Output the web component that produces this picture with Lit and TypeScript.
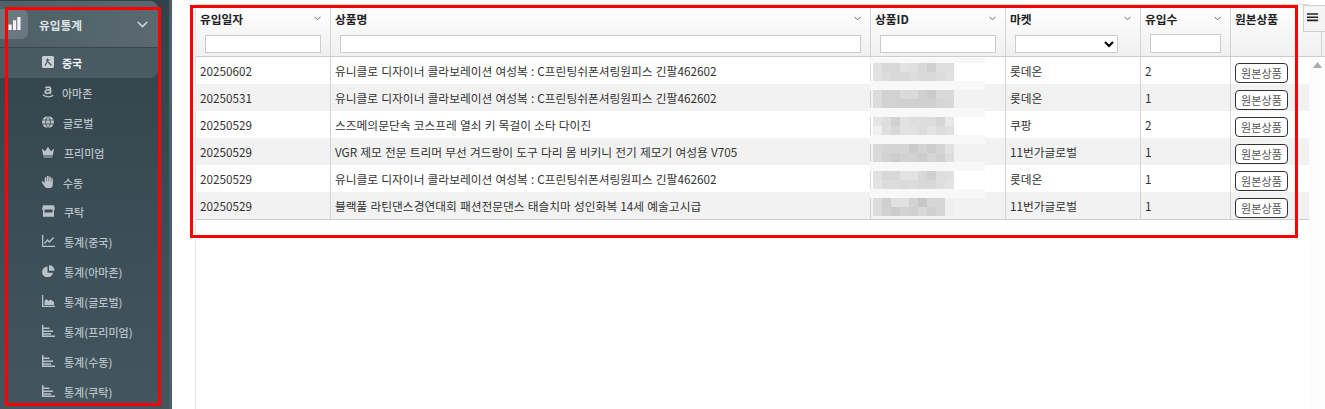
import { LitElement, html, css, svg } from "lit";
import { customElement } from "lit/decorators.js";

const ICONS: Record<string, any> = {
  china: svg`<path d="M0 1.500A1.500 1.500 0 0 1 1.500 0h9A1.500 1.500 0 0 1 12 1.500v9a1.500 1.500 0 0 1-1.500 1.500h-9A1.500 1.500 0 0 1 0 10.500z" fill="#c9d0d3"/><path d="M5.500 2.500 4.500 5M4.800 4h3M6.300 4 3 9.500M6 6l3.500 3.500" stroke="#46565e" stroke-width="1.100" fill="none"/>`,
  amazon: svg`<path d="M3.500 2.400C4.200 .6 8.500 .4 8.500 3.200V7.800M8.500 3.700C5.200 3.700 3.200 4.400 3.200 6s3.500 2 5.300-.3" stroke="currentColor" stroke-width="1.700" fill="none"/><path d="M.8 8.800c3 2.500 7.500 2.700 10.400.5" stroke="currentColor" stroke-width="1.200" fill="none"/>`,
  globe: svg`<circle cx="6" cy="6" r="6" fill="currentColor"/><path d="M0 4h12M0 8h12M6 0C3 3 3 9 6 12M6 0c3 3 3 9 0 12" stroke="#38484f" stroke-width=".8" fill="none"/>`,
  crown: svg`<path d="M0 2.500 3 5.300 6 .8l3 4.500 3-2.800-1.200 7H1.200z" fill="currentColor"/><path d="M1.500 10.500h9v1h-9z" fill="currentColor"/>`,
  hand: svg`<path transform="translate(-1 -1) scale(1.130)" d="M3.300 3c0-1.300 1.500-1.300 1.500 0v2.500h.4V1.300c0-1.300 1.600-1.300 1.600 0v4.200h.4V2.200c0-1.300 1.500-1.300 1.500 0v3.600h.4V3.500c0-1.200 1.400-1.200 1.400 0v4.500c0 2.500-1.500 4-3.800 4-2 0-3-.8-4-2.500L.8 6.800c-.6-1 .7-1.800 1.400-1l1.100 1.300z" fill="currentColor"/>`,
  store: svg`<path d="M1 .3h11l1 4.200H0z" fill="currentColor"/><path d="M1 4v7.700h11V4h-1.500v3.500h-8V4z" fill="currentColor"/>`,
  line: svg`<path d="M.6 0v11.400H13" stroke="currentColor" stroke-width="1.400" fill="none"/><path d="M2.500 8.500 5.500 5l2 2 4-4.500" stroke="currentColor" stroke-width="1.400" fill="none"/>`,
  pie: svg`<path d="M5.500 1.500a5.500 5.500 0 1 0 5.500 6.300H5.500z" fill="currentColor"/><path d="M7 0a5.500 5.500 0 0 1 5.500 5.800H7z" fill="currentColor"/>`,
  area: svg`<path d="M.6 0v11.400H13" stroke="currentColor" stroke-width="1.400" fill="none"/><path d="M2.500 10V6l2-2 2 2 2-1.500 3.500 2.500v3z" fill="currentColor"/>`,
  bars: svg`<path d="M.7 0v11.300H13" stroke="currentColor" stroke-width="1.500" fill="none"/><path d="M1 2.500h6.500v1.500H1zM1 5.400h10v1.500H1zM1 8.200h8v1.500H1z" fill="currentColor"/>`,
};

const MENU: [string, string, number][] = [
  ["china", "중국", 8],
  ["amazon", "아마존", 8],
  ["globe", "글로벌", 9],
  ["crown", "프리미엄", 10],
  ["hand", "수동", 9],
  ["store", "쿠탁", 10],
  ["line", "통계(중국)", 10],
  ["pie", "통계(아마존)", 10],
  ["area", "통계(글로벌)", 10],
  ["bars", "통계(프리미엄)", 10],
  ["bars", "통계(수동)", 10],
  ["bars", "통계(쿠탁)", 10],
];

const P1 = "유니클로 디자이너 콜라보레이션 여성복 : C프린팅쉬폰셔링원피스 긴팔462602";
const ROWS = [
  ["20250602", P1, "롯데온", "2"],
  ["20250531", P1, "롯데온", "1"],
  ["20250529", "스즈메의문단속 코스프레 열쇠 키 목걸이 소타 다이진", "쿠팡", "2"],
  ["20250529", "VGR 제모 전문 트리머 무선 겨드랑이 도구 다리 몸 비키니 전기 제모기 여성용 V705", "11번가글로벌", "1"],
  ["20250529", P1, "롯데온", "1"],
  ["20250529", "블랙풀 라틴댄스경연대회 패션전문댄스 태슬치마 성인화복 14세 예술고시급", "11번가글로벌", "1"],
];

const BLUR = [
  "e0 d8 d8 e2 e0 d8 cf de de", "e2 dc d8 d8 dc d8 d8 dc e0",
  "dc d2 d2 da da d0 ca da da", "dc d2 d2 d0 d0 d0 d0 d6 d8",
  "e4 de d2 e2 de de dc d6 e8", "f0 e0 d8 e2 e2 dc e4 dc e0",
  "d8 d4 d4 d4 cb d4 cc d4 e2", "da d2 cc d2 d2 cc d6 d0 dc",
  "e0 d8 d8 e2 e2 d8 d0 de e0", "e4 dc dc da dc d8 d8 de e2",
  "dc d0 e0 e0 d2 c8 d6 d6 f0", "dc d2 cc d2 d0 d8 d0 d6 f0",
];

const chevron = html`<svg class="chev" width="7" height="5" viewBox="0 0 7 5"><path d="M.5 .8 3.500 3.800 6.500 .8" fill="none" stroke="#666" stroke-width="1"/></svg>`;

@customElement("app-root")
export class AppRoot extends LitElement {
  static styles = css`
    :host {
      display: flex;
      position: relative;
      width: 1325px;
      height: 409px;
      overflow: hidden;
      background: #fff;
      font-family: "Noto Sans CJK KR", "Noto Sans", sans-serif;
      font-size: 11.73px;
      word-spacing: 0.54px;
      color: #333;
    }
    .sidebar {
      width: 169px;
      border-right: 3px solid #4c5f69;
      background: linear-gradient(180deg, #32424a 0%, #435660 100%);
      flex: none;
      padding-top: 1px;
      box-sizing: content-box;
    }
    .parent {
      width: 158px;
      height: 47px;
      display: flex;
      align-items: center;
      background: linear-gradient(90deg, #4e5f67, #59696f);
      border-radius: 0 8px 0 0;
      box-sizing: border-box;
      border-bottom: 1px solid #38474f;
      color: #dfe4e6;
      font-weight: 700;
    }
    .parent-icon {
      width: 28px;
      height: 30px;
      margin-right: 11px;
      background: #6a797f;
      border-radius: 0 7px 7px 0;
      display: flex;
      align-items: center;
      justify-content: center;
      margin-top: -1px;
    }
    .parent-label { flex: 1; }
    .parent-chev { margin-right: 10px; }
    .item {
      height: 29.9px;
      width: 158px;
      padding-left: 42px;
      box-sizing: border-box;
      display: flex;
      align-items: center;
      font-size: 11px;
      font-weight: 500;
      color: #b9c2c6;
      white-space: nowrap;
    }
    .item svg { flex: none; margin-top: -2px; }
    .item.active {
      background: #4a5a62;
      color: #eef1f2;
      font-weight: 700;
      border-radius: 0 0 8px 0;
    }
    .main {
      flex: 1;
      min-width: 0;
      display: flex;
      padding-left: 23px;
      padding-top: 4px;
    }
    .grid {
      width: 1113px;
      flex: none;
      border-left: 1px solid #e6e6e6;
      position: relative;
    }
    .row {
      display: grid;
      grid-template-columns: 135px 540px 135px 135px 90px 78px;
    }
    .head {
      height: 53px;
      box-sizing: border-box;
      border-top: 1px solid #ddd;
      border-bottom: 1px solid #ccc;
      background: linear-gradient(180deg, #ffffff 0%, #f0f0f0 100%);
    }
    .hcell {
      position: relative;
      border-right: 1px solid #d4d4d4;
      padding: 5px 0 0 4px;
      box-sizing: border-box;
      font-weight: 700;
      color: #222;
      line-height: 18px;
      min-width: 0;
    }
    .hcell:last-child { border-right: none; }
    .chev { position: absolute; right: 9px; top: 11px; }
    .filter {
      display: block;
      box-sizing: border-box;
      height: 18px;
      margin: 7px 9px 0 5px;
      width: calc(100% - 14px);
      border: 1px solid #ccc;
      background: #fff;
      padding: 0;
    }
    select.filter { border-radius: 0; margin-right: 22px; width: 103px; }
    .filter.tall { margin-top: 6px; height: 19px; width: 71px; }
    .body { position: relative; }
    .drow { height: 27px; }
    .drow:nth-child(even) { background: #f2f2f2; }
    .dcell {
      border-right: 1px solid #d4d4d4;
      padding-left: 4px;
      line-height: 28px;
      height: 27px;
      white-space: nowrap;
      overflow: hidden;
      color: #333;
      box-sizing: border-box;
    }
    .dcell:last-child { border-right: none; }
    .btn {
      display: block;
      width: 53px;
      height: 20px;
      margin-top: 6px;
      padding: 0;
      border: 1px solid #333;
      border-radius: 4px;
      background: #fff;
      font: 400 11px/18px "Noto Sans CJK KR", sans-serif;
      letter-spacing: 0.1px;
      color: #555;
    }
    .bottom { border-top: 1px solid #ccc; }
    .blur {
      position: absolute;
      left: 674px;
      top: 1px;
      width: 115px;
      height: 161px;
    }
    .blur-band {
      height: 27px;
      padding-left: 3px;
      box-sizing: border-box;
      display: flex;
      flex-direction: column;
    }
    .blur-band:first-child { height: 26px; }
    .blur-top {
      height: 6px;
      flex: none;
      margin-left: -3px;
      width: 115px;
      background: #f8f8f8;
    }
    .blur-band:first-child .blur-top { height: 5px; }
    .blur-end {
      height: 3px;
      flex: none;
      margin-left: -3px;
      width: 115px;
      background: #f8f8f8;
    }
    .blur-band:last-child .blur-end { display: none; }
    .blur-line { display: flex; height: 9px; flex: none; }
    .px { width: 9px; height: 9px; flex: none; }
    .rail {
      flex: 1;
      background: #fcfcfc;
      position: relative;
      margin-top: 28px;
    }
    .rail-head {
      height: 25px;
      box-sizing: border-box;
      border-bottom: 1px solid #ccc;
      background: linear-gradient(180deg, #f6f6f6, #f0f0f0);
      position: relative;
    }
    .rail-head::after {
      content: "";
      position: absolute;
      right: 3px;
      top: 0;
      bottom: 0;
      width: 1px;
      background: #d4d4d4;
    }
    .tri {
      display: block;
      margin: 5px 0 0 4px;
    }
    .menu-btn {
      position: absolute;
      left: 1303px;
      top: 5px;
      width: 23px;
      height: 27px;
      box-sizing: border-box;
      border: 1px solid #d0d0d0;
      background: #f4f4f4;
      padding: 7px 0 0 3px;
    }
    .menu-btn svg { display: block; }
    .mark {
      position: absolute;
      box-sizing: border-box;
      border: 3px solid #f00;
      pointer-events: none;
    }
    .mark.side { left: 5px; top: 7px; width: 156px; height: 399px; }
    .mark.table { left: 190px; top: 5px; width: 1108px; height: 233px; }
  `;

  render() {
    return html`
      <aside class="sidebar">
        <div class="parent">
          <span class="parent-icon">
            <svg width="13" height="13" viewBox="0 0 14 14"><path d="M.5 8h3.500v6H.5zM5.300 3.500h3.500V14H5.300zM10 0h3.500v14H10z" fill="#f2f4f5"/></svg>
          </span>
          <span class="parent-label">유입통계</span>
          <svg class="parent-chev" width="11" height="7" viewBox="0 0 11 7"><path d="M.8 1 5.500 5.600 10.200 1" fill="none" stroke="#d5dadc" stroke-width="1.500"/></svg>
        </div>
        ${MENU.map(
          ([icon, label, gap], i) => html`
            <div class="item ${i === 0 ? "active" : ""}">
              <svg width="13" height="12" viewBox="0 0 13 12" style="margin-right:${gap - 1}px">${ICONS[icon]}</svg>
              <span>${label}</span>
            </div>
          `
        )}
      </aside>
      <main class="main">
        <div class="grid">
          <div class="row head">
            <div class="hcell">유입일자${chevron}<input class="filter" /></div>
            <div class="hcell">상품명${chevron}<input class="filter" /></div>
            <div class="hcell">상품ID${chevron}<input class="filter" /></div>
            <div class="hcell">마켓${chevron}<select class="filter"><option></option></select></div>
            <div class="hcell">유입수${chevron}<input class="filter tall" /></div>
            <div class="hcell">원본상품</div>
          </div>
          <div class="body">
            ${ROWS.map(
              (r) => html`
                <div class="row drow">
                  <div class="dcell">${r[0]}</div>
                  <div class="dcell">${r[1]}</div>
                  <div class="dcell"></div>
                  <div class="dcell">${r[2]}</div>
                  <div class="dcell">${r[3]}</div>
                  <div class="dcell"><button class="btn">원본상품</button></div>
                </div>
              `
            )}
            <div class="blur">
              ${ROWS.map(
                (_, i) => html`
                  <div class="blur-band">
                    <div class="blur-top"></div>
                    ${[BLUR[i * 2], BLUR[i * 2 + 1]].map(
                      (l) => html`<div class="blur-line">
                        ${l.split(" ").map((c) => html`<div class="px" style="background:#${c}${c}${c}"></div>`)}
                      </div>`
                    )}
                    <div class="blur-end"></div>
                  </div>
                `
              )}
            </div>
          </div>
          <div class="bottom"></div>
        </div>
        <div class="rail">
          <div class="rail-head"></div>
          <svg class="tri" width="9" height="6" viewBox="0 0 9 6"><path d="M4.500 0 9 6H0z" fill="#aaa"/></svg>
        </div>
      </main>
      <div class="menu-btn">
        <svg width="12" height="9" viewBox="0 0 12 9"><path d="M0 1h11M0 4.200h11M0 7.400h11" stroke="#222" stroke-width="1.600"/></svg>
      </div>
      <div class="mark side"></div>
      <div class="mark table"></div>
    `;
  }
}
